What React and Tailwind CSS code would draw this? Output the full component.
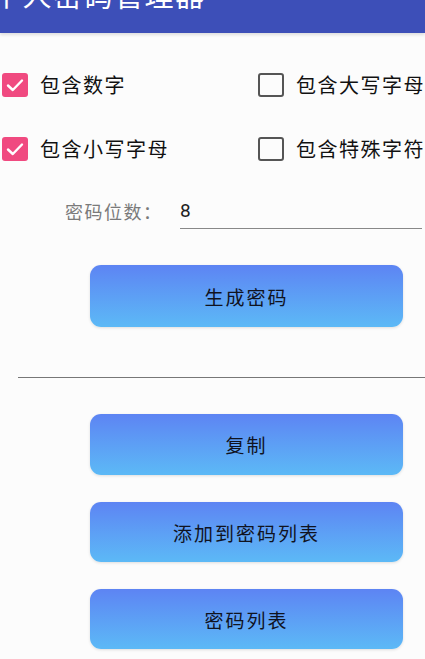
import React, { useState } from "react";

const Check = ({ checked, label, onToggle }) => (
  <button onClick={onToggle} className="flex items-center gap-[12px] text-left h-[24px]">
    {checked ? (
      <span className="w-[26px] h-[24px] rounded-[3px] bg-[#f04a80] flex items-center justify-center">
        <svg width="18" height="14" viewBox="0 0 18 14" fill="none">
          <path d="M2 7.5 L6.8 12 L16 2.5" stroke="white" strokeWidth="2.4" strokeLinecap="round" strokeLinejoin="round" />
        </svg>
      </span>
    ) : (
      <span className="w-[26px] h-[24px] rounded-[3px] border-[2.5px] border-[#555]" />
    )}
    <span className="text-[20px] leading-[24px] tracking-[1.5px] text-[#111] whitespace-nowrap">{label}</span>
  </button>
);

const GradButton = ({ children, className = "" }) => (
  <button
    className={`ml-[90px] w-[313px] rounded-[11px] bg-gradient-to-b from-[#5d84f3] to-[#5cb9f6] text-[19px] leading-none tracking-[2px] text-[#10131f] shadow-[0_1px_3px_rgba(0,0,0,0.12)] ${className}`}
  >
    {children}
  </button>
);

export default function App() {
  const [opts, setOpts] = useState({ num: true, upper: false, lower: true, special: false });
  const toggle = (k) => setOpts({ ...opts, [k]: !opts[k] });

  return (
    <div className="min-h-[659px] w-[425px] overflow-hidden bg-[#fcfcfc] font-['Noto_Sans_CJK_SC','Noto_Sans',sans-serif]">
      <div className="h-[33px] overflow-hidden bg-[#3d4fb8] shadow-[0_2px_3px_rgba(0,0,0,0.12)]">
        <h1 className="-mt-[20px] -ml-[8px] text-[29px] leading-none tracking-[1.5px] text-white whitespace-nowrap">
          个人密码管理器
        </h1>
      </div>

      <div className="grid grid-cols-[256px_1fr] gap-y-[40px] pl-[2px] mt-[40px]">
        <Check checked={opts.num} label="包含数字" onToggle={() => toggle("num")} />
        <Check checked={opts.upper} label="包含大写字母" onToggle={() => toggle("upper")} />
        <Check checked={opts.lower} label="包含小写字母" onToggle={() => toggle("lower")} />
        <Check checked={opts.special} label="包含特殊字符" onToggle={() => toggle("special")} />
      </div>

      <div className="flex items-center mt-[31px] h-[37px]">
        <span className="ml-[65px] w-[115px] text-[18px] leading-none tracking-[1.5px] text-[#7a7a7a]">密码位数：</span>
        <div className="w-[242px] h-full flex items-center border-b border-[#888] text-[19px] leading-none text-[#222] font-['Roboto',sans-serif]">
          8
        </div>
      </div>

      <GradButton className="h-[62px] mt-[36px] block">生成密码</GradButton>

      <div className="ml-[18px] mt-[50px] h-px bg-[#777]" />

      <div className="flex flex-col gap-[27px] mt-[36px]">
        <GradButton className="h-[61px]">复制</GradButton>
        <GradButton className="h-[60px]">添加到密码列表</GradButton>
        <GradButton className="h-[60px]">密码列表</GradButton>
      </div>
    </div>
  );
}
